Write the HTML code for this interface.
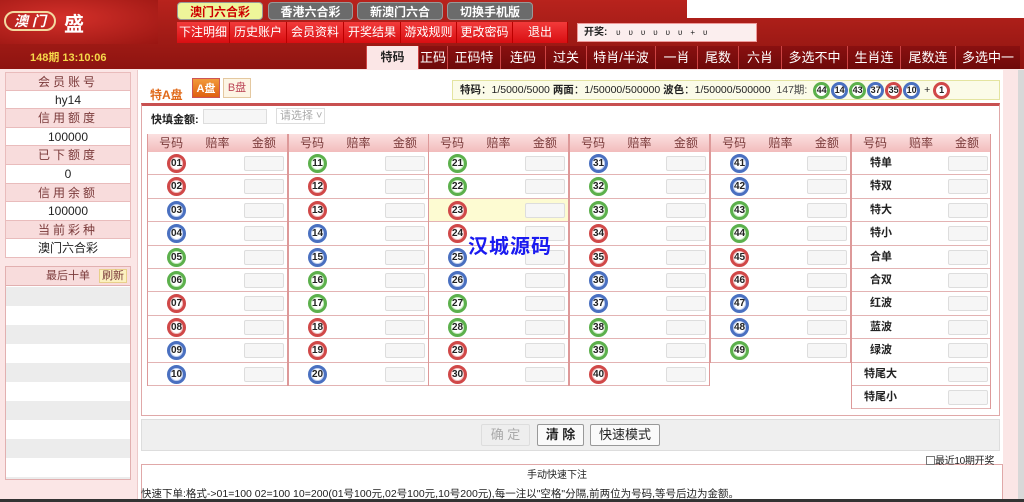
<!DOCTYPE html>
<html><head><meta charset="utf-8">
<style>
*{margin:0;padding:0;box-sizing:border-box}
body{width:1024px;height:502px;overflow:hidden;background:#fbe6e6;font-family:"Liberation Sans","Noto Sans CJK SC",sans-serif;font-size:12px;color:#222;position:relative}
.a{position:absolute}
#hdr{left:0;top:0;width:1024px;height:69px;background:linear-gradient(#b8231d,#8e1410)}
#logo{left:0;top:0;width:158px;height:44px;background:radial-gradient(ellipse at 40% 40%,#d4302a,#9a1612)}
.tt{top:2px;height:18px;border-radius:4px;background:#6b6b6b;color:#fff;font-weight:bold;font-size:12px;text-align:center;line-height:18px;border:1px solid #999}
.mi{top:22px;height:21px;background:linear-gradient(#f23a3a,#d80e12);color:#fff;font-size:12px;text-align:center;line-height:21px;border-right:1px solid #b00}
.tb{top:46px;height:23px;background:linear-gradient(#8a1010,#6e0a0a);color:#fff;font-size:13px;text-align:center;line-height:23px;border-left:1px solid #c44;white-space:nowrap;overflow:hidden}
.sb{left:5px;width:126px;height:18.6px;text-align:center;line-height:18.6px;border:1px solid #e9bcbc;border-top:none}
.sh{background:#f8dcdc;color:#7a3a3a;letter-spacing:3px}
.sd{background:#fff;color:#222}
.grp{top:134px;width:141px;border-left:1px solid #d99;border-right:1px solid #d99}
.gh{height:18px;background:linear-gradient(#fbe0e0,#f2bcbc);display:flex;color:#7a3a3a;font-size:12px;line-height:18px}
.gh span{flex:1;text-align:center}
.rw{height:23.4px;border-bottom:1px solid #e3b3b3;position:relative;background:#fff}
.in{position:absolute;left:96px;top:4px;width:40px;height:15px;border:1px solid #ddd;border-radius:2px;background:#f6f6f6}
.bl{position:absolute;left:19px;top:2px;width:19px;height:19px;border-radius:50%;font-size:10px;font-weight:bold;text-align:center;line-height:13px;color:#222;border:3px solid}
.bl.r{border-color:#d04848;background:#fff;box-shadow:inset 0 0 0 1px #f0c0c0}
.bl.b{border-color:#4a70c0;background:#fff;box-shadow:inset 0 0 0 1px #c0d0f0}
.bl.g{border-color:#5cb04c;background:#fff;box-shadow:inset 0 0 0 1px #c8ecc0}
.tx{position:absolute;left:18px;top:0;line-height:23px;font-weight:bold;font-size:11px}
.sm{display:inline-block;width:17px;height:17px;border-radius:50%;border:3px solid;font-size:9px;font-weight:bold;text-align:center;line-height:11px;background:#fff;vertical-align:middle;margin-right:1px}
.btn{top:424px;height:22px;border:1px solid #999;border-radius:2px;background:#fafafa;font-size:13px;text-align:center;line-height:20px}
</style></head><body>
<div id="hdr" class="a"></div>
<div id="logo" class="a"></div>
<div class="a" style="left:687px;top:0;width:337px;height:18px;background:#fff"></div>
<div class="a" style="left:4px;top:11px;width:52px;height:20px;border:2px solid #f3d9a0;border-radius:12px;color:#fff;font-style:italic;font-weight:bold;font-size:14px;text-align:center;line-height:16px">澳 门</div>
<div class="a" style="left:64px;top:8px;color:#fff;font-size:20px;font-weight:bold">盛</div>
<div class="a" style="left:30px;top:49px;color:#f6d94a;font-size:11px;font-weight:bold">148期 13:10:06</div>
<div class="a tt" style="left:177px;width:86px;background:#eef59a;color:#c00">澳门六合彩</div>
<div class="a tt" style="left:268px;width:85px">香港六合彩</div>
<div class="a tt" style="left:357px;width:86px">新澳门六合</div>
<div class="a tt" style="left:447px;width:86px">切换手机版</div>
<div class="a mi" style="left:177px;width:53px">下注明细</div>
<div class="a mi" style="left:230px;width:57px">历史账户</div>
<div class="a mi" style="left:287px;width:57px">会员资料</div>
<div class="a mi" style="left:344px;width:57px">开奖结果</div>
<div class="a mi" style="left:401px;width:56px">游戏规则</div>
<div class="a mi" style="left:457px;width:56px">更改密码</div>
<div class="a mi" style="left:513px;width:55px">退出</div>
<div class="a" style="left:577px;top:23px;width:180px;height:19px;background:#fbeeee;border:1px solid #e99;font-size:10px;font-weight:bold;line-height:17px;padding-left:6px">开奖: <span style="font-weight:normal;font-size:8px;letter-spacing:8px;margin-left:6px">υυυυυυ+υ</span></div>
<div class="a tb" style="left:366px;width:52px;background:#fbe6e6;color:#222;font-weight:bold;font-size:12px">特码</div>
<div class="a tb" style="left:418px;width:29px">正码</div>
<div class="a tb" style="left:447px;width:53px">正码特</div>
<div class="a tb" style="left:500px;width:45px">连码</div>
<div class="a tb" style="left:545px;width:41px">过关</div>
<div class="a tb" style="left:586px;width:69px">特肖/半波</div>
<div class="a tb" style="left:655px;width:42px">一肖</div>
<div class="a tb" style="left:697px;width:41px">尾数</div>
<div class="a tb" style="left:738px;width:43px">六肖</div>
<div class="a tb" style="left:781px;width:66px">多选不中</div>
<div class="a tb" style="left:847px;width:53px">生肖连</div>
<div class="a tb" style="left:900px;width:55px">尾数连</div>
<div class="a tb" style="left:955px;width:65px">多选中一</div>

<div class="a sb sh" style="top:72px;border-top:1px solid #e9bcbc">会员账号</div>
<div class="a sb sd" style="top:90.6px">hy14</div>
<div class="a sb sh" style="top:109.2px">信用额度</div>
<div class="a sb sd" style="top:127.8px">100000</div>
<div class="a sb sh" style="top:146.4px">已下额度</div>
<div class="a sb sd" style="top:165px">0</div>
<div class="a sb sh" style="top:183.6px">信用余额</div>
<div class="a sb sd" style="top:202.2px">100000</div>
<div class="a sb sh" style="top:220.8px">当前彩种</div>
<div class="a sb sd" style="top:239.4px">澳门六合彩</div>
<div class="a" style="left:5px;top:266px;width:126px;height:214px;border:1px solid #e2b0b0;background:repeating-linear-gradient(#ececec 0 19px,#fff 19px 38px);background-position:0 20px;background-repeat:repeat-y"></div>
<div class="a" style="left:5px;top:266px;width:126px;height:20px;background:#f8dcdc;border:1px solid #e2b0b0;color:#7a3a3a;font-size:11px;line-height:18px;padding-left:40px">最后十单 <span style="background:#fcf1c0;border:1px solid #e8d08a;padding:0 2px;margin-left:6px">刷新</span></div>

<div class="a" style="left:137px;top:70px;width:866px;height:432px;background:#fff;border-left:1px solid #eccaca"></div>
<div class="a" style="left:1018px;top:70px;width:6px;height:430px;background:#d8d8d8"></div>
<div class="a" style="left:150px;top:86px;color:#e06a1a;font-weight:bold;font-size:12px">特A盘</div>
<div class="a" style="left:192px;top:78px;width:28px;height:20px;background:linear-gradient(#f29a3a,#e06010);color:#fff;font-weight:bold;font-size:11px;text-align:center;line-height:20px;border:1px solid #c55">A盘</div>
<div class="a" style="left:223px;top:78px;width:28px;height:20px;background:#fdf5e4;color:#b45;font-size:11px;text-align:center;line-height:19px;border:1px solid #e4c8a0">B盘</div>
<div class="a" style="left:452px;top:80px;width:548px;height:20px;background:#fbfbe8;border:1px solid #e4e4a0;font-size:10.5px;line-height:18px;padding-left:7px;white-space:nowrap"><b>特码</b>：1/5000/5000 <b>两面</b>：1/50000/500000 <b>波色</b>：1/50000/500000 &nbsp;<span style="color:#444">147期:</span> &nbsp;<span class="sm" style="border-color:#5cb04c">44</span><span class="sm" style="border-color:#4a70c0">14</span><span class="sm" style="border-color:#5cb04c">43</span><span class="sm" style="border-color:#4a70c0">37</span><span class="sm" style="border-color:#d04848">35</span><span class="sm" style="border-color:#4a70c0">10</span> + <span class="sm" style="border-color:#d04848">1</span></div>
<div class="a" style="left:141px;top:103px;width:859px;height:313px;border:1px solid #e0a8a8;border-top:3px solid #c85050;background:#fff"></div>
<div class="a" style="left:151px;top:111px;font-weight:bold;font-size:11px">快填金额:</div>
<div class="a" style="left:203px;top:109px;width:64px;height:15px;border:1px solid #ddd;background:#f6f6f6"></div>
<div class="a" style="left:276px;top:108px;width:49px;height:16px;border:1px solid #ddd;color:#aaa;font-size:11px;line-height:14px;padding-left:3px;white-space:nowrap;overflow:hidden">请选择 ˅</div>
<div class="a" style="left:147px;top:134px;width:843px;height:1px;background:#d99"></div>

<div class="a grp" style="left:147px">
<div class="gh"><span>号码</span><span>赔率</span><span>金额</span></div>
<div class="rw"><div class="bl r">01</div><div class="in"></div></div>
<div class="rw"><div class="bl r">02</div><div class="in"></div></div>
<div class="rw"><div class="bl b">03</div><div class="in"></div></div>
<div class="rw"><div class="bl b">04</div><div class="in"></div></div>
<div class="rw"><div class="bl g">05</div><div class="in"></div></div>
<div class="rw"><div class="bl g">06</div><div class="in"></div></div>
<div class="rw"><div class="bl r">07</div><div class="in"></div></div>
<div class="rw"><div class="bl r">08</div><div class="in"></div></div>
<div class="rw"><div class="bl b">09</div><div class="in"></div></div>
<div class="rw"><div class="bl b">10</div><div class="in"></div></div>
</div>
<div class="a grp" style="left:288px">
<div class="gh"><span>号码</span><span>赔率</span><span>金额</span></div>
<div class="rw"><div class="bl g">11</div><div class="in"></div></div>
<div class="rw"><div class="bl r">12</div><div class="in"></div></div>
<div class="rw"><div class="bl r">13</div><div class="in"></div></div>
<div class="rw"><div class="bl b">14</div><div class="in"></div></div>
<div class="rw"><div class="bl b">15</div><div class="in"></div></div>
<div class="rw"><div class="bl g">16</div><div class="in"></div></div>
<div class="rw"><div class="bl g">17</div><div class="in"></div></div>
<div class="rw"><div class="bl r">18</div><div class="in"></div></div>
<div class="rw"><div class="bl r">19</div><div class="in"></div></div>
<div class="rw"><div class="bl b">20</div><div class="in"></div></div>
</div>
<div class="a grp" style="left:428px">
<div class="gh"><span>号码</span><span>赔率</span><span>金额</span></div>
<div class="rw"><div class="bl g">21</div><div class="in"></div></div>
<div class="rw"><div class="bl g">22</div><div class="in"></div></div>
<div class="rw" style="background:#fdfbd2"><div class="bl r">23</div><div class="in"></div></div>
<div class="rw"><div class="bl r">24</div><div class="in"></div></div>
<div class="rw"><div class="bl b">25</div><div class="in"></div></div>
<div class="rw"><div class="bl b">26</div><div class="in"></div></div>
<div class="rw"><div class="bl g">27</div><div class="in"></div></div>
<div class="rw"><div class="bl g">28</div><div class="in"></div></div>
<div class="rw"><div class="bl r">29</div><div class="in"></div></div>
<div class="rw"><div class="bl r">30</div><div class="in"></div></div>
</div>
<div class="a grp" style="left:569px">
<div class="gh"><span>号码</span><span>赔率</span><span>金额</span></div>
<div class="rw"><div class="bl b">31</div><div class="in"></div></div>
<div class="rw"><div class="bl g">32</div><div class="in"></div></div>
<div class="rw"><div class="bl g">33</div><div class="in"></div></div>
<div class="rw"><div class="bl r">34</div><div class="in"></div></div>
<div class="rw"><div class="bl r">35</div><div class="in"></div></div>
<div class="rw"><div class="bl b">36</div><div class="in"></div></div>
<div class="rw"><div class="bl b">37</div><div class="in"></div></div>
<div class="rw"><div class="bl g">38</div><div class="in"></div></div>
<div class="rw"><div class="bl g">39</div><div class="in"></div></div>
<div class="rw"><div class="bl r">40</div><div class="in"></div></div>
</div>
<div class="a grp" style="left:710px">
<div class="gh"><span>号码</span><span>赔率</span><span>金额</span></div>
<div class="rw"><div class="bl b">41</div><div class="in"></div></div>
<div class="rw"><div class="bl b">42</div><div class="in"></div></div>
<div class="rw"><div class="bl g">43</div><div class="in"></div></div>
<div class="rw"><div class="bl g">44</div><div class="in"></div></div>
<div class="rw"><div class="bl r">45</div><div class="in"></div></div>
<div class="rw"><div class="bl r">46</div><div class="in"></div></div>
<div class="rw"><div class="bl b">47</div><div class="in"></div></div>
<div class="rw"><div class="bl b">48</div><div class="in"></div></div>
<div class="rw"><div class="bl g">49</div><div class="in"></div></div>
</div>
<div class="a grp" style="left:851px;width:140px">
<div class="gh"><span>号码</span><span>赔率</span><span>金额</span></div>
<div class="rw"><div class="tx">特单</div><div class="in"></div></div>
<div class="rw"><div class="tx">特双</div><div class="in"></div></div>
<div class="rw"><div class="tx">特大</div><div class="in"></div></div>
<div class="rw"><div class="tx">特小</div><div class="in"></div></div>
<div class="rw"><div class="tx">合单</div><div class="in"></div></div>
<div class="rw"><div class="tx">合双</div><div class="in"></div></div>
<div class="rw"><div class="tx">红波</div><div class="in"></div></div>
<div class="rw"><div class="tx">蓝波</div><div class="in"></div></div>
<div class="rw"><div class="tx">绿波</div><div class="in"></div></div>
<div class="rw"><div class="tx" style="left:12px">特尾大</div><div class="in"></div></div>
<div class="rw"><div class="tx" style="left:12px">特尾小</div><div class="in"></div></div>
</div>

<div class="a" style="left:468px;top:230px;color:#1a1af0;font-weight:bold;font-size:20px;letter-spacing:1px">汉城源码</div>

<div class="a" style="left:141px;top:419px;width:859px;height:32px;background:#efefef;border:1px solid #ddd"></div>
<div class="a btn" style="left:481px;width:49px;color:#aaa;border-color:#ddd;background:#eee">确 定</div>
<div class="a btn" style="left:537px;width:47px;font-weight:bold">清 除</div>
<div class="a btn" style="left:590px;width:70px">快速模式</div>
<div class="a" style="left:926px;top:452px;font-size:10px;white-space:nowrap;letter-spacing:-0.3px;z-index:5"><span style="display:inline-block;width:9px;height:9px;border:1px solid #777;vertical-align:-1px;background:#fff"></span>最近10期开奖</div>
<div class="a" style="left:141px;top:464px;width:862px;height:38px;border:1px solid #e0a8a8;border-bottom:none;background:#fff"></div>
<div class="a" style="left:527px;top:466px;font-size:10px">手动快速下注</div>
<div class="a" style="left:141px;top:486px;font-size:10.5px;white-space:nowrap">快速下单:格式-&gt;01=100 02=100 10=200(01号100元,02号100元,10号200元),每一注以"空格"分隔,前两位为号码,等号后边为金额。</div>
<div class="a" style="left:0;top:499px;width:1024px;height:3px;background:#333"></div>
</body></html>
